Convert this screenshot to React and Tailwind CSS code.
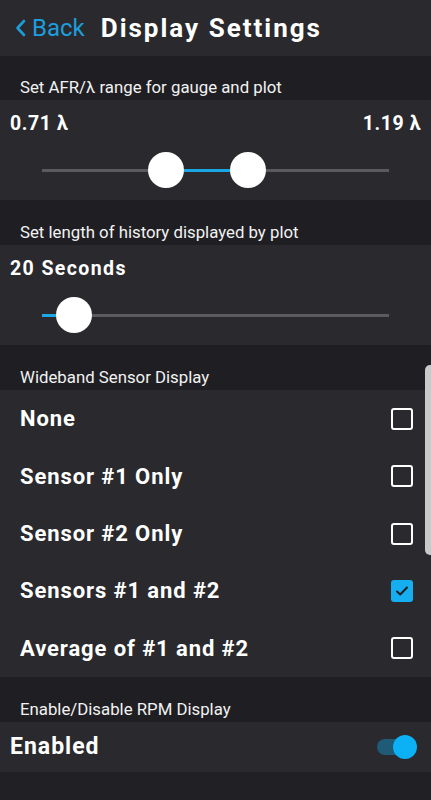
import React from 'react';

const font = { fontFamily: 'Roboto, "Noto Sans", sans-serif' };

const SectionLabel = ({ children, className = '' }) => (
  <div className={`flex items-end px-5 pb-0 bg-[#1f1f23] text-[16.8px] text-[#f2f2f2] ${className}`}>
    {children}
  </div>
);

const Thumb = () => <div className="h-[36px] w-[36px] shrink-0 rounded-full bg-white" />;

const RangeSlider = () => (
  <div className="flex h-[36px] items-center px-[42px]">
    <div className="h-[3px] w-[106px] bg-[#5b5b5f]" />
    <Thumb />
    <div className="h-[3px] w-[46px] bg-[#1ba6e6]" />
    <Thumb />
    <div className="h-[3px] flex-1 bg-[#5b5b5f]" />
  </div>
);

const HistorySlider = () => (
  <div className="flex h-[36px] items-center px-[42px]">
    <div className="h-[3px] w-[14px] bg-[#1ba6e6]" />
    <Thumb />
    <div className="h-[3px] flex-1 bg-[#5b5b5f]" />
  </div>
);

const Checkbox = ({ checked }) =>
  checked ? (
    <div className="flex h-[22px] w-[22px] items-center justify-center rounded-[3px] bg-[#15aef0]">
      <svg width="16" height="16" viewBox="0 0 16 16" fill="none">
        <path d="M3 8.5l3.2 3L13 4.5" stroke="#1d1d21" strokeWidth="2" strokeLinecap="round" strokeLinejoin="round" />
      </svg>
    </div>
  ) : (
    <div className="h-[22px] w-[22px] rounded-[3px] border-[2px] border-white" />
  );

const options = [
  { label: 'None', checked: false },
  { label: 'Sensor #1 Only', checked: false },
  { label: 'Sensor #2 Only', checked: false },
  { label: 'Sensors #1 and #2', checked: true },
  { label: 'Average of #1 and #2', checked: false },
];

export default function App() {
  return (
    <div className="relative h-[800px] w-[431px] overflow-hidden bg-[#212125] text-white" style={font}>
      {/* header */}
      <div className="flex h-[56px] items-center bg-[#2a2a2e] pl-[14px]">
        <div className="flex items-center gap-[4px] text-[#1d9ddc]">
          <svg width="14" height="20" viewBox="0 0 14 20" fill="none">
            <path d="M10 3L3.5 10l6.5 7" stroke="#1d9ddc" strokeWidth="2.6" strokeLinecap="round" strokeLinejoin="round" />
          </svg>
          <span className="text-[24px] leading-none">Back</span>
        </div>
        <span className="ml-[16px] text-[26px] font-bold leading-none tracking-[2px]">Display Settings</span>
      </div>

      <SectionLabel className="h-[44px]">Set AFR/λ range for gauge and plot</SectionLabel>
      <div className="h-[100px] bg-[#2a2a2e] pt-[12px]">
        <div className="flex justify-between px-[10px] text-[19.5px] font-bold leading-[24px] tracking-[0.6px]">
          <span>0.71 λ</span>
          <span>1.19 λ</span>
        </div>
        <div className="mt-[16px]">
          <RangeSlider />
        </div>
      </div>

      <SectionLabel className="h-[45px]">Set length of history displayed by plot</SectionLabel>
      <div className="h-[100px] bg-[#2a2a2e] pt-[12px]">
        <div className="px-[10px] text-[19.5px] font-bold leading-[24px] tracking-[1.4px]">20 Seconds</div>
        <div className="mt-[16px]">
          <HistorySlider />
        </div>
      </div>

      <SectionLabel className="h-[45px]">Wideband Sensor Display</SectionLabel>
      <div className="flex h-[287px] flex-col bg-[#2a2a2e]">
        {options.map((o) => (
          <div key={o.label} className="flex h-[57.5px] items-center justify-between pl-[20px] pr-[18px]">
            <span className="text-[22px] font-bold tracking-[0.9px]">{o.label}</span>
            <Checkbox checked={o.checked} />
          </div>
        ))}
      </div>

      <SectionLabel className="h-[45px]">Enable/Disable RPM Display</SectionLabel>
      <div className="flex h-[50px] items-center justify-between bg-[#2a2a2e] pl-[10px] pr-[14px]">
        <span className="text-[23px] font-bold tracking-[1px]">Enabled</span>
        <div className="relative flex h-[24px] w-[40px] items-center">
          <div className="h-[16px] w-[36px] rounded-full bg-[#1f5a76]" />
          <div className="absolute right-0 h-[24px] w-[24px] rounded-full bg-[#0cb0f4]" />
        </div>
      </div>

      {/* scroll indicator */}
      <div className="absolute right-0 top-[365px] h-[190px] w-[6px] rounded-l-[5px] bg-[#c9c9c9]" />
    </div>
  );
}
